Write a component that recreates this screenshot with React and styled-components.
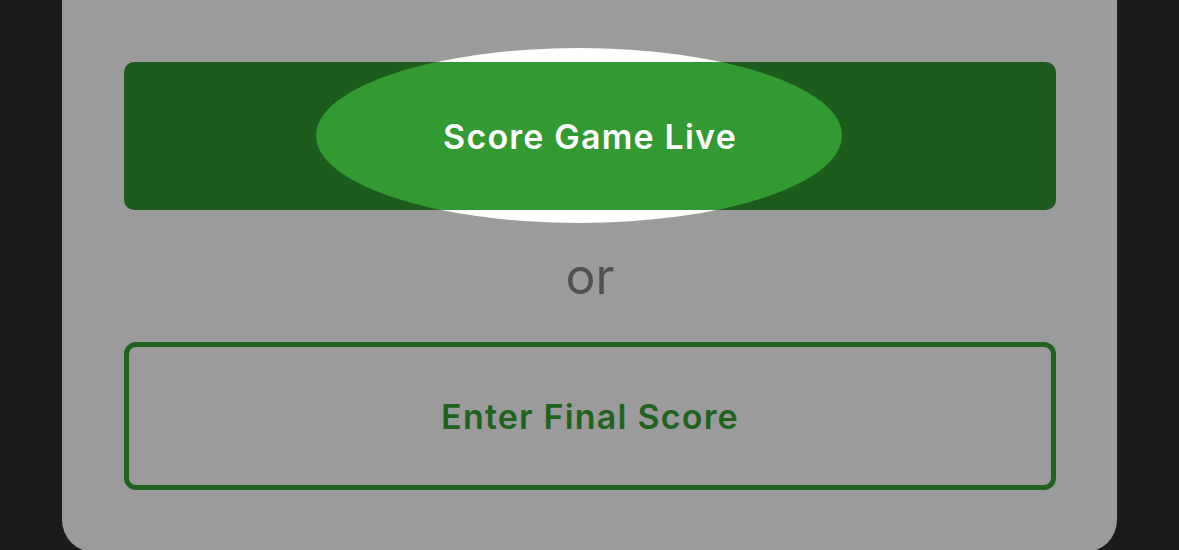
import React from "react";
import styled, { createGlobalStyle } from "styled-components";

const GlobalStyle = createGlobalStyle`
  html, body {
    margin: 0;
    padding: 0;
    background-color: #1b1b1b;
    overflow: hidden;
  }
  body {
    font-family: Inter, Roboto, "Liberation Sans", sans-serif;
  }
`;

const Screen = styled.div`
  width: 1179px;
  height: 550px;
  padding-left: 62px;
  box-sizing: border-box;
`;

const Card = styled.div`
  width: 1055px;
  height: 552px;
  box-sizing: border-box;
  padding: 62px 61px 0 62px;
  background-color: #9b9b9b;
  border-radius: 0 0 32px 32px;
  display: flex;
  flex-direction: column;
`;

const ButtonWrap = styled.div`
  position: relative;
`;

// touch ripple, same ellipse drawn twice: white behind, bright green clipped inside
const Ripple = styled.span`
  position: absolute;
  left: 192px;
  top: -14px;
  width: 526px;
  height: 175px;
  border-radius: 50%;
  background-color: ${(p) => p.$color};
  pointer-events: none;
`;

const LiveButton = styled.button`
  position: relative;
  display: flex;
  align-items: center;
  justify-content: center;
  width: 100%;
  height: 148px;
  padding: 0;
  border: none;
  border-radius: 10px;
  overflow: hidden;
  background-color: #1e5c1e;
  cursor: pointer;
`;

const Label = styled.span`
  position: relative;
  font-family: Inter, Roboto, "Liberation Sans", sans-serif;
  font-size: 34px;
  font-weight: 600;
  letter-spacing: 1.2px;
  color: ${(p) => p.$color};
`;

const Or = styled.div`
  height: 132px;
  display: flex;
  align-items: center;
  justify-content: center;
  font-size: 50px;
  color: #505050;
  box-sizing: border-box;
`;

const FinalButton = styled.button`
  display: flex;
  align-items: center;
  justify-content: center;
  width: 100%;
  height: 148px;
  padding: 0;
  background: transparent;
  border: 5px solid #1f631f;
  border-radius: 12px;
  box-sizing: border-box;
  cursor: pointer;
`;

export default function App() {
  return (
    <>
      <GlobalStyle />
      <Screen>
        <Card>
          <ButtonWrap>
            <Ripple $color="#ffffff" />
            <LiveButton>
              <Ripple $color="#339933" />
              <Label $color="#ffffff">Score Game Live</Label>
            </LiveButton>
          </ButtonWrap>
          <Or>or</Or>
          <FinalButton>
            <Label $color="#1f631f">Enter Final Score</Label>
          </FinalButton>
        </Card>
      </Screen>
    </>
  );
}
